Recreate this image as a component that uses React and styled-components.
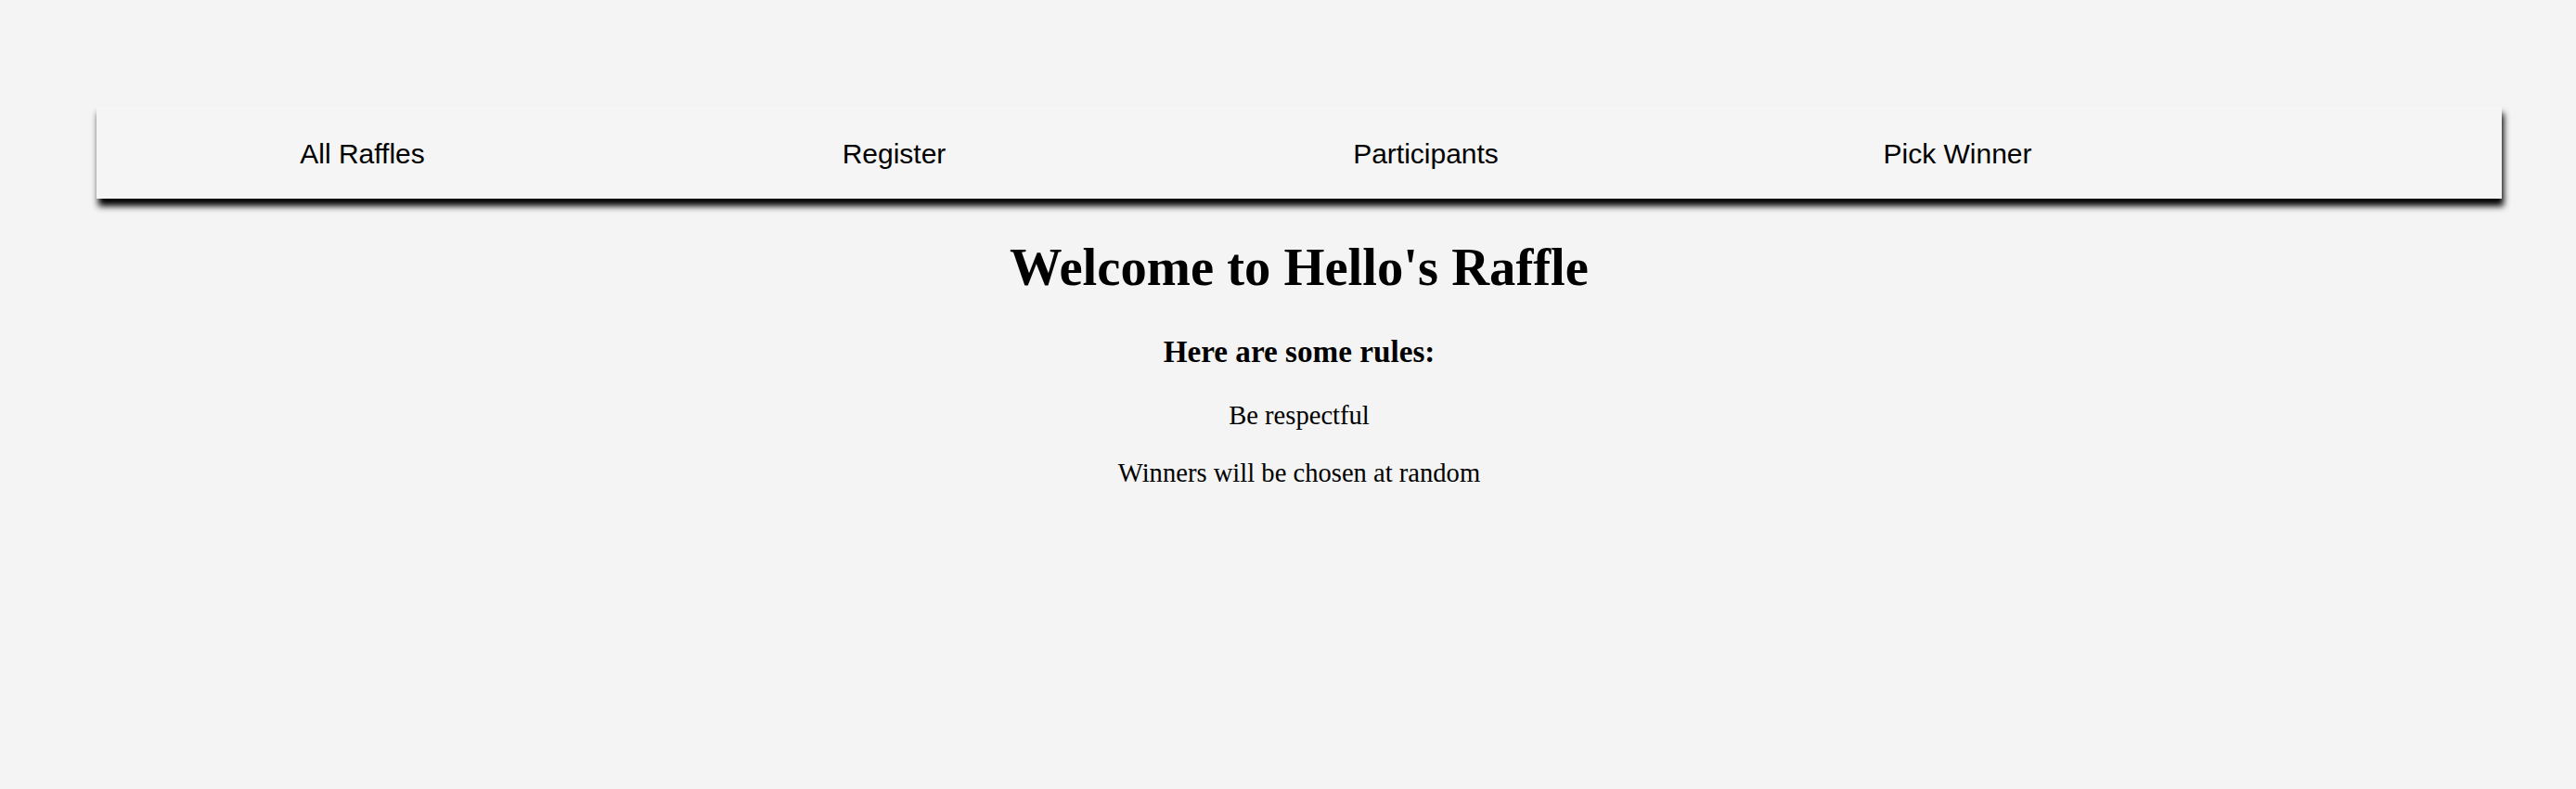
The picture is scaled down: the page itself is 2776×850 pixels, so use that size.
import React from "react";
import styled, { createGlobalStyle } from "styled-components";

const GlobalStyle = createGlobalStyle`
  html, body {
    margin: 0;
    padding: 0;
    background: #f4f4f4;
  }
  body {
    font-family: "Liberation Serif", "Times New Roman", serif;
    color: #000;
  }
`;

const Page = styled.div`
  box-sizing: border-box;
  width: 2776px;
  min-height: 850px;
  padding: 114px 80px 0 104px;
  background: #f4f4f4;
`;

const NavBar = styled.nav`
  box-sizing: border-box;
  height: 100px;
  padding-top: 4px;
  display: grid;
  grid-template-columns: repeat(4, 573px);
  align-items: center;
  background: #f5f5f5;
  box-shadow: 2px 8px 7px rgba(0, 0, 0, 1);
`;

const NavLink = styled.a`
  font-family: "Liberation Sans", Arial, Helvetica, sans-serif;
  font-size: 30px;
  color: #000;
  text-decoration: none;
  text-align: center;
  cursor: pointer;
`;

const Content = styled.main`
  display: flex;
  flex-direction: column;
  align-items: center;
  text-align: center;
`;

const Title = styled.h1`
  margin: 42px 0 0;
  font-size: 56.6px;
  line-height: 1.15;
  font-weight: 700;
`;

const Subtitle = styled.h3`
  margin: 39px 0 0;
  font-size: 33.2px;
  line-height: 1.15;
  font-weight: 700;
`;

const Rule = styled.p`
  margin: ${(p) => p.$gap}px 0 0;
  font-size: 28.6px;
  line-height: 1.15;
`;

const links = ["All Raffles", "Register", "Participants", "Pick Winner"];
const rules = ["Be respectful", "Winners will be chosen at random"];

export default function App() {
  return (
    <>
      <GlobalStyle />
      <Page>
        <NavBar>
          {links.map((l) => (
            <NavLink key={l}>{l}</NavLink>
          ))}
        </NavBar>
        <Content>
          <Title>Welcome to Hello's Raffle</Title>
          <Subtitle>Here are some rules:</Subtitle>
          {rules.map((r, i) => (
            <Rule key={r} $gap={i === 0 ? 34 : 29}>
              {r}
            </Rule>
          ))}
        </Content>
      </Page>
    </>
  );
}
